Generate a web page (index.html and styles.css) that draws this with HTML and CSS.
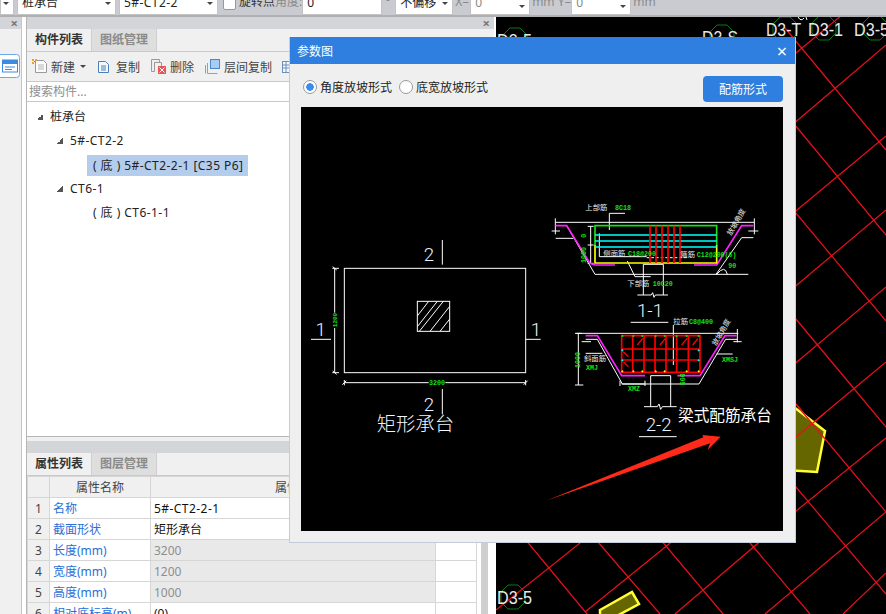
FILE: index.html
```html
<!DOCTYPE html>
<html lang="zh-CN">
<head>
<meta charset="utf-8">
<title>参数图</title>
<link rel="stylesheet" href="styles.css">
</head>
<body>
<div class="app">
  <header class="topbar">
    <div class="sel sel-stub"><i class="caret"></i></div>
    <div class="sel sel-a"><span>桩承台</span><i class="caret"></i></div>
    <div class="sel sel-a"><span class="num">5#-CT2-2</span><i class="caret"></i></div>
    <span class="check"></span>
    <span class="lbl">旋转点</span>
    <span class="lbl dim">角度:</span>
    <div class="sel sel-b"><span>0</span></div>
    <span class="lbl dim deg">°</span>
    <div class="sel sel-c"><span>不偏移</span><i class="caret"></i></div>
    <span class="lbl dim xy">X=</span>
    <div class="sel sel-d"><span class="dim">0</span><i class="caret"></i></div>
    <span class="lbl dim mm">mm Y=</span>
    <div class="sel sel-d"><span class="dim">0</span><i class="caret"></i></div>
    <span class="lbl dim mm">mm</span>
  </header>

  <div class="main">
    <aside class="strip">
      <div class="bar"><span class="x">×</span></div>
      <div class="strip-icon">
        <svg width="20" height="24" viewBox="0 0 20 24"><rect x="-3" y="0.5" width="22.500" height="23" rx="3" fill="#fff" stroke="#6aa9ee"/><rect x="2.500" y="6" width="15" height="12" fill="#fff" stroke="#3d8be0"/><rect x="2" y="6" width="16" height="4" fill="#3d8be0"/><path d="M5 13h10M5 15.500h7" stroke="#3d8be0"/></svg>
      </div>
    </aside>
    <div class="rule"></div>

    <section class="panel">
      <div class="bar bar-main"><span class="x">×</span></div>
      <nav class="tabs">
        <span class="tab on">构件列表</span><span class="tab">图纸管理</span>
      </nav>
      <div class="tools">
        <span class="tool t-new">
          <svg width="16" height="15" viewBox="0 0 16 15"><path d="M3.500 1.500h8l3 3v9h-11z" fill="#fbfbfb" stroke="#9a9a9a"/><path d="M6 6h6M6 8h6M6 10h6" stroke="#b5b5b5"/><rect x="0" y="0" width="2" height="2" fill="#f0a030"/><rect x="3" y="0" width="2" height="2" fill="#f0a030"/><rect x="0" y="3" width="2" height="2" fill="#f0a030"/><rect x="2" y="2" width="1" height="1" fill="#e05a20"/></svg>
          新建<i class="caret"></i>
        </span>
        <span class="tool t-copy">
          <svg width="12" height="14" viewBox="0 0 12 14"><path d="M0.500 1.500v11h10v-8l-3-3z" fill="#f4f8fd" stroke="#4a7fb8"/><path d="M3 6h5M3 8h5M3 10h5" stroke="#4a7fb8"/></svg>
          复制
        </span>
        <span class="tool t-del">
          <svg width="15" height="15" viewBox="0 0 15 15"><path d="M0.500 0.500h8v3h-5v9h-3z" fill="#eee" stroke="#9a9a9a"/><path d="M3.500 3.500h7v4" fill="none" stroke="#9a9a9a"/><rect x="7" y="7" width="8" height="8" fill="#e55757"/><path d="M8.500 8.500l5 5M13.500 8.500l-5 5" stroke="#fff"/></svg>
          删除
        </span>
        <span class="tool t-floor">
          <svg width="15" height="15" viewBox="0 0 15 15"><path d="M2.500 4v10.500h10M0.500 6v8.500" fill="none" stroke="#ef8a3c"/><rect x="5.500" y="0.500" width="9" height="9" fill="#a8cdf2" stroke="#4a87cc"/></svg>
          层间复制
        </span>
        <span class="tool t-more">
          <svg width="12" height="14" viewBox="0 0 12 14"><rect x="0.500" y="1.500" width="11" height="11" fill="#f4f8fd" stroke="#6a8fb8"/><path d="M0 5h12M0 8h12M4 2v10" stroke="#6a8fb8"/></svg>
        </span>
      </div>
      <div class="search"><input class="search-input" type="text" placeholder="搜索构件..."></div>
      <ul class="tree">
        <li class="node d0"><i class="tri"></i>桩承台</li>
        <li class="node d1 num"><i class="tri"></i>5#-CT2-2</li>
        <li class="node d2"><span class="sel-row num">( 底 ) 5#-CT2-2-1 [C35 P6]</span></li>
        <li class="node d1 num"><i class="tri"></i>CT6-1</li>
        <li class="node d2"><span class="plain-row num">( 底 ) CT6-1-1</span></li>
      </ul>
      <div class="split"></div>
      <div class="bar bar-prop"></div>
      <nav class="tabs tabs-b">
        <span class="tab on">属性列表</span><span class="tab">图层管理</span>
      </nav>
      <div class="prop-wrap">
        <table class="prop">
          <colgroup><col class="c1"><col class="c2"><col class="c3"><col class="c4"></colgroup>
          <thead>
            <tr><th></th><th>属性名称</th><th>属性值</th><th>附加</th></tr>
          </thead>
          <tbody>
            <tr><th>1</th><td class="k">名称</td><td class="num">5#-CT2-2-1</td><td></td></tr>
            <tr><th>2</th><td class="k">截面形状</td><td>矩形承台</td><td></td></tr>
            <tr><th>3</th><td class="k">长度(mm)</td><td class="ro">3200</td><td></td></tr>
            <tr><th>4</th><td class="k">宽度(mm)</td><td class="ro">1200</td><td></td></tr>
            <tr><th>5</th><td class="k">高度(mm)</td><td class="ro">1000</td><td></td></tr>
            <tr><th>6</th><td class="k">相对底标高(m)</td><td>(0)</td><td></td></tr>
          </tbody>
        </table>
        <div class="scroll"></div>
      </div>
    </section>

    <div class="canvas">
      <svg class="cad-bg" width="390" height="597" viewBox="496 17 390 597">
        <defs><polygon id="oct" points="-5,-12 5,-12 12,-5 12,5 5,12 -5,12 -12,5 -12,-5"/></defs>
        <g class="grid">
          <line x1="785" y1="28" x2="886" y2="150"/>
          <line x1="785" y1="113" x2="886" y2="235"/>
          <line x1="785" y1="200" x2="886" y2="321"/>
          <line x1="785" y1="306" x2="886" y2="427"/>
          <line x1="785" y1="391" x2="886" y2="512"/>
          <line x1="785" y1="474" x2="886" y2="594"/>
          <line x1="740" y1="531" x2="810" y2="614"/>
          <line x1="650" y1="527" x2="723" y2="614"/>
          <line x1="585" y1="527" x2="660" y2="614"/>
          <line x1="515" y1="527" x2="587" y2="614"/>
          <line x1="785" y1="62" x2="842" y2="15"/>
          <line x1="785" y1="131" x2="886" y2="45"/>
          <line x1="785" y1="220" x2="886" y2="136"/>
          <line x1="785" y1="295" x2="886" y2="210"/>
          <line x1="785" y1="372" x2="886" y2="287"/>
          <line x1="785" y1="446" x2="886" y2="362"/>
          <line x1="785" y1="520" x2="886" y2="438"/>
          <line x1="765" y1="614" x2="886" y2="512"/>
          <line x1="843" y1="614" x2="886" y2="573"/>
          <line x1="675" y1="614" x2="790" y2="516"/>
          <line x1="585" y1="612" x2="690" y2="527"/>
          <line x1="496" y1="610" x2="600" y2="527"/>
        </g>
        <polygon class="pile" points="790,404 825,431 817,472 785,470"/>
        <polygon class="pile" points="600,610 632,592 639,604 600,625"/>
        <line class="grid-line" x1="785" y1="391" x2="825" y2="439"/>
        <line class="grid-line" x1="785" y1="446" x2="825" y2="413"/>
        <g class="octs">
          <use href="#oct" x="515" y="40"/><use href="#oct" x="722" y="37"/>
          <use href="#oct" x="785" y="29"/><use href="#oct" x="824" y="28"/>
          <use href="#oct" x="875" y="28"/><use href="#oct" x="513" y="597"/>
        </g>
        <g class="tag">
          <text x="497" y="47" textLength="35" lengthAdjust="spacingAndGlyphs">D3-5</text>
          <text x="702" y="44" textLength="36" lengthAdjust="spacingAndGlyphs">D3-S</text>
          <text x="766" y="36" textLength="35" lengthAdjust="spacingAndGlyphs">D3-T</text>
          <text x="808" y="36" textLength="35" lengthAdjust="spacingAndGlyphs">D3-1</text>
          <text x="854" y="36" textLength="35" lengthAdjust="spacingAndGlyphs">D3-5</text>
          <text x="497" y="604" textLength="35" lengthAdjust="spacingAndGlyphs">D3-5</text>
        </g>
        <path class="bit" d="M798 17q3 5 6 1M806 17l1 3"/>
      </svg>
    </div>
  </div>

  <div class="dialog">
    <div class="dlg-head"><span>参数图</span><span class="dlg-x">×</span></div>
    <div class="dlg-opts">
      <label class="radio"><i class="dot on"></i>角度放坡形式</label>
      <label class="radio"><i class="dot"></i>底宽放坡形式</label>
      <button class="btn" type="button">配筋形式</button>
    </div>
    <div class="figure">
      <svg width="482" height="424" viewBox="301 107 482 424">
        <defs><clipPath id="hatch"><rect x="352" y="213" width="97" height="91"/></clipPath></defs>

        <!-- plan -->
        <g transform="translate(300 230) scale(.33333)">
          <g class="w">
            <rect x="133" y="115" width="544" height="313"/>
            <rect x="352" y="214" width="97" height="90"/>
            <path d="M104 115v313M97 115h20M97 428h20M133 458h544M133 450v16M677 450v16M427 30v74M427 477v76M33 328h60M677 328h45"/>
            <path d="M98 110l12 10M98 423l12 10M127 464l12-12M671 464l12-12"/>
          </g>
          <g class="w" clip-path="url(#hatch)">
            <path d="M352 258l34-44M352 290l60-76M358 304l72-90M390 304l60-76M420 304l30-38"/>
          </g>
          <rect x="386" y="450" width="50" height="15" fill="#000"/>
          <text class="dimt" x="411" y="464" text-anchor="middle">3200</text>
          <rect x="96" y="248" width="16" height="46" fill="#000"/>
          <text class="dimt dimv" transform="rotate(-90 110 270)" x="110" y="270" text-anchor="middle">1200</text>
          <text class="sec" x="387" y="94" text-anchor="middle">2</text>
          <text class="sec" x="62" y="317" text-anchor="middle">1</text>
          <text class="sec" x="708" y="317" text-anchor="middle">1</text>
          <text class="sec" x="387" y="543" text-anchor="middle">2</text>
          <text class="title" x="346" y="603" text-anchor="middle">矩形承台</text>
        </g>

        <!-- section 1-1 -->
        <g transform="translate(540 195) scale(.33333)">
          <g class="w">
            <path d="M47 82h596M46 70v48M643 70v48M35 108h25M625 108h30M47 130h53M80 92l85 146h460M528 238l77-110h35"/>
            <path d="M152 94v111M143 94h18M143 150h18M143 205h18"/>
            <path d="M208 105V55h47M178 115v70h142M262 198l23 47h47"/>
            <path d="M310 208h60M310 208v92M370 208v92M292 300h42l4-7 4 14 4-7h38"/>
            <path d="M272 382h113"/>
            <path d="M530 238q25-30 32 0"/>
          </g>
          <path class="dash" d="M320 188h120"/>
          <path class="m thick" d="M47 92h33l70 113 15 5h60M462 210h68l75-118h35"/>
          <g class="thick">
            <path class="g" d="M165 150V92h365v58"/>
            <path class="y" d="M165 150v54h365v-54"/>
            <path class="c" d="M165 120h365M165 138h365M165 156h365"/>
            <path class="r" d="M330 92v112M348 92v112M366 92v112M384 92v112M402 92v112M420 92v112"/>
          </g>
          <text class="lab" x="136" y="45">上部筋</text>
          <text class="gt" x="225" y="44">8C18</text>
          <text class="lab" x="190" y="184">侧面筋</text>
          <text class="gt" x="264" y="183">C18@200</text>
          <text class="lab" x="421" y="186">箍筋</text>
          <text class="gt" x="470" y="185">C12@200(6)</text>
          <text class="lab" x="262" y="273">下部筋</text>
          <text class="gt" x="338" y="272">10C20</text>
          <text class="gt" x="565" y="218">90</text>
          <text class="gt" transform="rotate(-90 139 180)" x="139" y="180" text-anchor="middle">1000</text>
          <text class="gt" transform="rotate(-90 138 122)" x="138" y="122" text-anchor="middle">0</text>
          <text class="lab" transform="rotate(-60 590 82)" x="590" y="88" text-anchor="middle">放坡角度</text>
          <text class="sec" x="330" y="366" text-anchor="middle">1-1</text>
          <text class="lab" x="400" y="386">拉筋</text>
          <text class="gt" x="447" y="386">C8@400</text>
        </g>

        <!-- section 2-2 -->
        <g transform="translate(540 310) scale(.33333)">
          <g class="w">
            <path d="M110 70h485M592 57v40M115 70v155M105 70h20M105 225h25M125 95h28M580 95h25"/>
            <path d="M137 88h35l75 134h230l80-134h35M137 130h50M530 132h48"/>
            <path d="M400 45v120M240 212v16M315 212v16M332 197h60M332 197v93M392 197v93M312 290h40l5-8 5 16 5-8h43"/>
            <path d="M245 222h70M297 380h113"/>
          </g>
          <path class="m thick" d="M137 77h35l73 120h70M412 197h68l75-120h35"/>
          <path class="r thick" d="M245 77h235v110H245zM278 77v110M312 77v110M345 77v110M378 77v110M410 77v110M445 77v110M245 117h235M245 150h235"/>
          <path class="r" d="M292 105l16-20M360 105l16-20M425 105l16-20M458 105l16-20M250 125l15 15M250 155l15 15"/>
          <g class="dots">
            <path class="g" d="M247 75v6M245 78h6M280 75v6M277 78h6M307 75v6M304 78h6M347 75v6M344 78h6M374 75v6M371 78h6M410 75v6M407 78h6M440 75v6M437 78h6M476 75v6M473 78h6"/>
            <path class="c" d="M247 118v6M244 121h6M247 148v6M244 151h6M476 118v6M473 121h6M476 148v6M473 151h6"/>
            <path class="y" d="M247 181v6M244 184h6M280 181v6M277 184h6M307 181v6M304 184h6M347 181v6M344 184h6M374 181v6M371 184h6M440 181v6M437 184h6M476 181v6M473 184h6"/>
          </g>
          <text class="lab" x="132" y="154">斜面筋</text>
          <text class="gt" x="138" y="180">XMJ</text>
          <text class="gt" x="546" y="156">XMSJ</text>
          <text class="gt" x="264" y="244">XMZ</text>
          <text class="gt" transform="rotate(-90 436 208)" x="436" y="208" text-anchor="middle">600</text>
          <text class="gt" transform="rotate(-90 120 150)" x="120" y="150" text-anchor="middle">1000</text>
          <text class="lab" transform="rotate(-60 545 68)" x="545" y="74" text-anchor="middle">放坡角度</text>
          <text class="sec" x="356" y="364" text-anchor="middle">2-2</text>
          <text class="note" x="414" y="334">梁式配筋承台</text>
          <polygon class="arrow" points="18,572 490,382 487,375 542,380 503,420 510,400"/>
        </g>
      </svg>
    </div>
  </div>
</div>
</body>
</html>
```
FILE: styles.css
```css
* { box-sizing: border-box; }
html, body { margin: 0; padding: 0; }
body {
  font-family: "Noto Sans", "Noto Sans CJK SC", sans-serif;
  font-size: 12px;
  color: #222;
  background: #000;
}
.app {
  position: relative;
  width: 886px;
  height: 614px;
  overflow: hidden;
  display: flex;
  flex-direction: column;
}
.num { letter-spacing: .45px; }

/* top toolbar */
.topbar {
  flex: 0 0 17px;
  display: flex;
  align-items: flex-end;
  background: #c9cbd0;
  border-bottom: 2px solid #aeb0b4;
  overflow: hidden;
}
.sel {
  position: relative;
  flex: none;
  height: 24px;
  background: #fff;
  border: 1px solid #c4c4c4;
  padding: 0 0 0 4px;
  margin-right: 3px;
  line-height: 22px;
  font-size: 12px;
  color: #222;
}
.sel .caret { position: absolute; right: 4px; top: 10px; }
.sel-stub { width: 14px; margin-right: 3px; }
.sel-a { width: 99px; }
.sel-b { width: 80px; }
.sel-c { width: 58px; margin-left: 2px; margin-right: 1px; }
.sel-d { width: 60px; margin-right: 1px; }
.sel-d .caret { top: 13px; }
.caret {
  display: inline-block;
  width: 0;
  height: 0;
  border-left: 3px solid transparent;
  border-right: 3px solid transparent;
  border-top: 3px solid #444;
}
.check {
  flex: none;
  width: 13px;
  height: 20px;
  margin: 0 3px 5px 2px;
  background: #fff;
  border: 1px solid #999;
  border-radius: 2px;
}
.lbl { flex: none; line-height: 22px; height: 24px; white-space: nowrap; color: #333; }
.lbl.dim, .dim { color: #8a8a8a; }
.deg { width: 8px; }
.xy { margin-left: 1px; margin-right: 1px; }
.mm { margin-left: 1px; margin-right: 0; }

/* main row */
.main { flex: 1; display: flex; min-height: 0; }
.bar {
  height: 12px;
  background: #d3d5d9;
  display: flex;
  justify-content: flex-end;
  align-items: center;
}
.x { font-size: 13px; line-height: 12px; color: #777; font-weight: 700; }
.strip {
  flex: 0 0 22px;
  background: #f0f0f0;
  border-right: 1px solid #c6c6c6;
}
.strip .bar { padding-right: 3px; }
.strip-icon { margin-top: 25px; display: flex; height: 24px; }
.rule { flex: 0 0 4px; background: #fff; }

.panel {
  flex: 0 0 468px;
  display: flex;
  flex-direction: column;
  background: #f0f0f0;
  border-left: 1px solid #b5b5b5;
}
.bar-main { padding-right: 4px; }
.tabs {
  flex: 0 0 23px;
  display: flex;
  background: #f0f0f0;
  border-bottom: 1px solid #c9c9c9;
}
.tab {
  width: 65px;
  line-height: 22px;
  text-align: center;
  font-weight: 700;
  color: #8a8a8a;
  background: #dedede;
  border-right: 1px solid #cfcfcf;
}
.tab.on { color: #333; background: #f0f0f0; }
.tools {
  flex: 0 0 30px;
  display: flex;
  align-items: center;
  border-bottom: 1px solid #c9c9c9;
  color: #444;
  font-size: 12px;
}
.tool { display: inline-flex; align-items: center; gap: 5px; white-space: nowrap; }
.t-new { margin-left: 5px; gap: 3px; }
.t-new .caret { margin-left: 2px; }
.t-copy { margin-left: 12px; gap: 6px; }
.t-del { margin-left: 11px; gap: 4px; }
.t-floor { margin-left: 11px; gap: 4px; }
.t-more { margin-left: 10px; }
.search {
  flex: 0 0 20px;
  background: #fff;
  border-bottom: 1px solid #c9c9c9;
}
.search-input {
  width: 100%;
  height: 18px;
  border: 0;
  padding: 0 2px;
  font: 12px "Noto Sans", "Noto Sans CJK SC", sans-serif;
  background: #fff;
  outline: 0;
}
.search-input::placeholder { color: #8e8e8e; opacity: 1; }
.tree {
  flex: 0 0 335px;
  margin: 0;
  padding: 3px 0 0;
  list-style: none;
  background: #fff;
  border-bottom: 1px solid #b5b5b5;
  color: #222;
}
.node { height: 24px; line-height: 22px; display: flex; align-items: center; white-space: nowrap; }
.d0 { padding-left: 10px; }
.d1 { padding-left: 30px; }
.d2 { padding-left: 60px; }
.tri {
  flex: none;
  width: 6px;
  height: 6px;
  margin-right: 7px;
  background: linear-gradient(135deg, transparent 50%, #555 50%);
}
.sel-row { display: block; width: 161px; height: 21px; line-height: 21px; padding-left: 6px; background: #b4cdec; }
.plain-row { display: block; padding-left: 6px; }
.split { flex: 0 0 4px; background: #f0f0f0; }
.bar-prop { flex: 0 0 12px; }
.tabs-b { flex: 0 0 22px; }

.prop-wrap { flex: 1; display: flex; background: #fff; min-height: 0; }
.prop {
  flex: none;
  width: 449px;
  height: 0;
  table-layout: fixed;
  border-collapse: collapse;
  font-size: 12px;
}
.c1 { width: 22px; }
.c2 { width: 101px; }
.c3 { width: 285px; }
.c4 { width: 41px; }
.prop th, .prop td {
  height: 21px;
  padding: 0 3px;
  border: 1px solid #d6d6d6;
  font-weight: 400;
  white-space: nowrap;
  overflow: hidden;
}
.prop th { background: #f0f0f0; color: #444; text-align: center; }
.prop td { background: #fff; color: #111; }
.prop .k { color: #2a6fd6; }
.prop .ro { background: #e9e9e9; color: #8e8e8e; }
.scroll { flex: 0 0 7px; margin-left: 4px; background: #cfcfcf; }

/* CAD canvas */
.canvas { flex: 1; background: #000; border-left: 2px solid #fff; min-width: 0; overflow: hidden; }
.cad-bg { display: block; }
.grid line, .grid-line { stroke: #e8101c; stroke-width: 1.200; }
.pile { fill: #666600; stroke: #ffff33; stroke-width: 2.500; }
.octs use { fill: none; stroke: #0a7a10; stroke-width: 1; }
.tag text { fill: #e8e8e8; font: 18px "Liberation Sans", sans-serif; }
.bit { fill: none; stroke: #fff; }

/* dialog */
.dialog {
  position: absolute;
  left: 289px;
  top: 37px;
  width: 507px;
  height: 506px;
  display: flex;
  flex-direction: column;
  background: #efefef;
  border: 1px solid #c5cbdc;
  border-top: 0;
}
.dlg-head {
  flex: 0 0 27px;
  display: flex;
  justify-content: space-between;
  align-items: center;
  padding: 0 8px 0 7px;
  background: #2e7fe0;
  color: #fff;
  font-size: 12px;
}
.dlg-x { font-size: 18px; line-height: 18px; }
.dlg-opts {
  flex: 0 0 43px;
  display: flex;
  align-items: center;
  padding: 6px 12px 0 13px;
  color: #222;
}
.radio { display: inline-flex; align-items: center; gap: 3px; margin: 0 7px 4px 0; }
.dot {
  flex: none;
  width: 14px;
  height: 14px;
  border-radius: 50%;
  background: #fff;
  border: 1px solid #9a9a9a;
}
.dot.on { background: radial-gradient(circle, #3b8cf0 0 3.500px, #fff 4px); }
.btn {
  margin-left: auto;
  width: 80px;
  height: 26px;
  border: 0;
  border-radius: 4px;
  background: #2e7fe0;
  color: #fff;
  font: 12px "Noto Sans", "Noto Sans CJK SC", sans-serif;
}
.figure { margin: 0 12px 0 11px; height: 424px; background: #000; }
.figure svg { display: block; }

.w, .w path, .w rect { fill: none; stroke: #fff; stroke-width: 3; }
.dash { fill: none; stroke: #fff; stroke-width: 3; stroke-dasharray: 8 6; }
.m { fill: none; stroke: #ff20ff; }
.g { fill: none; stroke: #16e016; }
.y { fill: none; stroke: #ffff00; }
.c { fill: none; stroke: #00ffff; }
.r { fill: none; stroke: #ff0000; stroke-width: 4; }
.thick, .thick path { stroke-width: 5; }
.dots path { stroke-width: 3; }
.lab { fill: #e8e8e8; font: 22px "Noto Sans CJK SC", sans-serif; }
.gt { fill: #14e014; font: 700 20px "Liberation Mono", monospace; }
.dimt { fill: #14e014; font: 700 20px "Liberation Mono", monospace; }
.dimv { font-size: 18px; }
.sec { fill: #eef3ff; font: 300 56px Roboto, sans-serif; }
.title { fill: #f2f5ff; font: 300 58px "Noto Sans CJK SC", sans-serif; }
.note { fill: #fff; font: 47px "Noto Sans CJK SC", sans-serif; }
.arrow { fill: #ff2a1a; }
```
